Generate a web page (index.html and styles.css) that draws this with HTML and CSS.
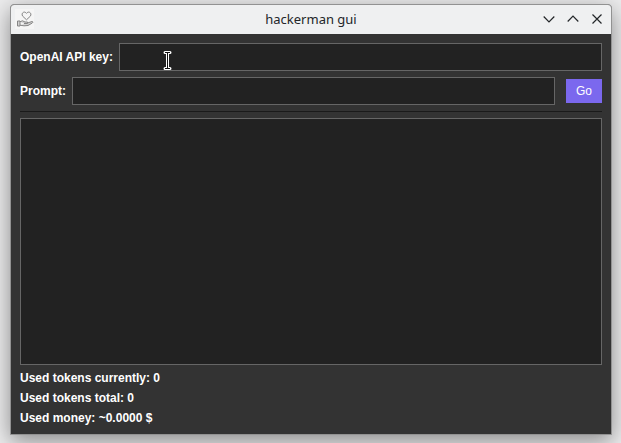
FILE: index.html
```html
<!DOCTYPE html>
<html lang="en">
<head>
<meta charset="utf-8">
<title>hackerman gui</title>
<link rel="stylesheet" href="styles.css">
</head>
<body>
<main class="window">
  <header class="titlebar">
    <svg class="app-icon" viewBox="0 0 19 20" width="19" height="20" fill="none" stroke="#858585" stroke-width="1">
      <rect width="19" height="20" fill="#f5f5f5" stroke="none"/>
      <path d="M11.500 10.800 7.700 7.200C5.600 4.500 9.300 1.200 11.500 4.400 13.700 1.200 17.400 4.500 15.300 7.200Z"/>
      <path d="M2.500 12h2.500v5H2.500zM5 12.700l2.500-.9 2.500 1.200h2.500v1.500H9M12.500 14l4.500-1.500c1.200 0 1 1 .3 1.500L13 16.500l-4 .3-4-.6" fill="#d2d2d2"/>
    </svg>
    <h1 class="title">hackerman gui</h1>
    <div class="controls">
      <svg viewBox="0 0 12 12" width="12" height="12"><path d="M.7 3.500 6 8.800 11.300 3.500"/></svg>
      <svg viewBox="0 0 12 12" width="12" height="12"><path d="M.7 8.500 6 3.200 11.300 8.500"/></svg>
      <svg viewBox="0 0 12 12" width="12" height="12"><path d="M1.500 1.500l9 9M10.500 1.500l-9 9"/></svg>
    </div>
  </header>
  <section class="content">
    <div class="row">
      <label class="label key-label" for="key">OpenAI API key:</label>
      <input class="field" id="key" type="text">
    </div>
    <div class="row prompt-row">
      <label class="label prompt-label" for="prompt">Prompt:</label>
      <input class="field" id="prompt" type="text">
      <button class="go" type="button">Go</button>
    </div>
    <hr class="divider">
    <div class="output"></div>
    <div class="stats">
      <div>Used tokens currently: 0</div>
      <div>Used tokens total: 0</div>
      <div>Used money: ~0.0000 $</div>
    </div>
  </section>
</main>
<svg class="cursor" viewBox="0 0 9 21" width="9" height="21">
  <path d="M2 2.500h5M4.500 2.500v16M2 18.500h5" stroke="#fff" stroke-width="3"  stroke-linecap="round"/>
  <path d="M2 2.500h5M4.500 2.500v16M2 18.500h5" stroke="#111" stroke-width="1"/>
</svg>
</body>
</html>
```
FILE: styles.css
```css
* { box-sizing: border-box; }
body {
  margin: 0;
  padding: 4px 9px 8px 10px;
  height: 443px;
  overflow: hidden;
  background: #ececed;
  font: bold 12px/20px "Liberation Sans", Arial, sans-serif;
  color: #fff;
}
.window {
  display: flex;
  flex-direction: column;
  width: 602px;
  height: 431px;
  border: 1px solid #929292;
  border-radius: 4px 4px 0 0;
  background: #333;
  box-shadow: 0 6px 22px rgba(0, 0, 0, .42);
  overflow: hidden;
}
.titlebar {
  display: grid;
  grid-template-columns: 80px 1fr 80px;
  align-items: center;
  height: 29px;
  flex: none;
  padding-bottom: 1px;
  background: #eff0f1;
  color: #232629;
}
.app-icon { margin-left: 4px; }
.title {
  margin: 0;
  text-align: center;
  font: 13px/20px "Noto Sans", sans-serif;
}
.controls {
  display: flex;
  gap: 12px;
  justify-content: flex-end;
  padding-right: 8px;
}
.controls path { fill: none; stroke: #232629; stroke-width: 1.2; }
.content {
  flex: 1;
  display: flex;
  flex-direction: column;
  padding: 9px 9px 0;
}
.row { display: flex; align-items: center; height: 28px; }
.prompt-row { margin-top: 6px; }
.label { flex: none; }
.key-label { width: 99px; }
.prompt-label { width: 52px; }
.field {
  flex: 1;
  min-width: 0;
  height: 28px;
  margin: 0;
  padding: 0 6px;
  border: 1px solid #666;
  background: #222;
  color: #fff;
  outline: 0;
}
.go {
  width: 36px;
  height: 24px;
  margin: 0 0 0 11px;
  padding: 0;
  border: 0;
  background: #7b68ee;
  color: #fff;
  font: 12px/24px "Liberation Sans", Arial, sans-serif;
}
.divider {
  width: 100%;
  height: 1px;
  margin: 6px 0;
  border: 0;
  background: #1a1a1a;
}
.output { flex: none; height: 247px; border: 1px solid #666; background: #222; }
.stats { padding-top: 3px; }
.cursor { position: absolute; left: 163px; top: 50px; }
```
